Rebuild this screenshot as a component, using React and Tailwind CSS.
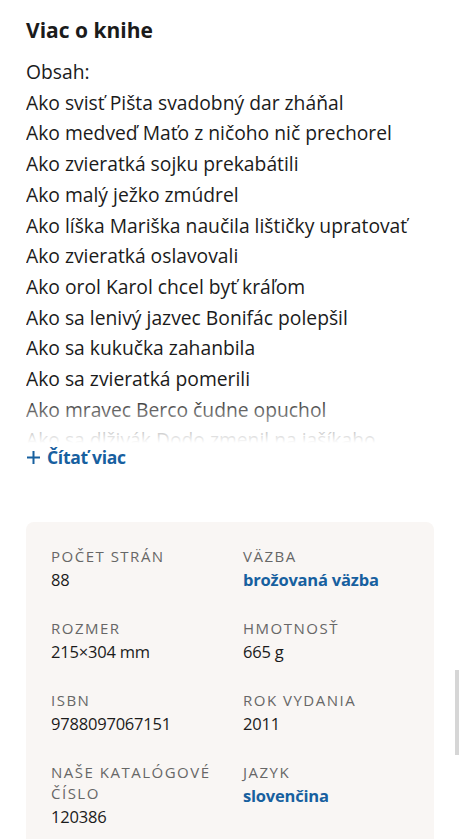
import React from "react";

const items = [
  "Obsah:",
  "Ako svisť Pišta svadobný dar zháňal",
  "Ako medveď Maťo z ničoho nič prechorel",
  "Ako zvieratká sojku prekabátili",
  "Ako malý ježko zmúdrel",
  "Ako líška Mariška naučila lištičky upratovať",
  "Ako zvieratká oslavovali",
  "Ako orol Karol chcel byť kráľom",
  "Ako sa lenivý jazvec Bonifác polepšil",
  "Ako sa kukučka zahanbila",
  "Ako sa zvieratká pomerili",
  "Ako mravec Berco čudne opuchol",
  "Ako sa dlživák Dodo zmenil na jašíkaho",
];

const specs = [
  [{ l: "Počet strán", v: "88" }, { l: "Väzba", v: "brožovaná väzba", link: true }],
  [{ l: "Rozmer", v: "215×304 mm" }, { l: "Hmotnosť", v: "665 g" }],
  [{ l: "ISBN", v: "9788097067151" }, { l: "Rok vydania", v: "2011" }],
  [{ l: "Naše katalógové číslo", v: "120386" }, { l: "Jazyk", v: "slovenčina", link: true }],
];

export default function App() {
  return (
    <div className="min-h-[839px] bg-white px-[26px] pt-[16px] text-[#1b1b1b]" style={{ fontFamily: "'Open Sans', Lato, sans-serif" }}>
      <h2 className="text-[21px] font-bold leading-[28px]">Viac o knihe</h2>
      <div className="relative mt-[13px] h-[386px] overflow-hidden">
        {items.map((t, i) => (
          <div key={i} className="text-[19.3px] leading-[30.7px] whitespace-nowrap">{t}</div>
        ))}
        <div className="absolute inset-x-0 bottom-0 h-[48px] bg-gradient-to-b from-white/0 to-white" />
      </div>
      <button className="mt-[1px] flex items-center gap-[6px] text-[17.5px] font-bold leading-[26px] tracking-[-0.3px] text-[#17609f]">
        <svg width="15" height="15" viewBox="0 0 15 15" fill="none" stroke="currentColor" strokeWidth="2">
          <path d="M7.5 1v13M1 7.5h13" />
        </svg>
        Čítať viac
      </button>
      <div className="mt-[52px] rounded-[8px] bg-[#f9f6f4] px-[25px] pt-[24px] pb-[20px]">
        {specs.map((row, ri) => (
          <div key={ri} className="grid grid-cols-[192px_1fr] mb-[26px]">
            {row.map((c, ci) => (
              <div key={ci}>
                <div className="text-[15px] uppercase tracking-[1.5px] leading-[21px] text-[#676767] pr-[8px]">{c.l}</div>
                <div className={`text-[16.5px] leading-[25px] tracking-[-0.2px] ${c.link ? "font-bold text-[#17609f]" : "text-[#1b1b1b]"}`}>{c.v}</div>
              </div>
            ))}
          </div>
        ))}
      </div>
      <div className="fixed right-[1px] top-[670px] h-[85px] w-[4px] bg-[#d6d6d6]" />
    </div>
  );
}
